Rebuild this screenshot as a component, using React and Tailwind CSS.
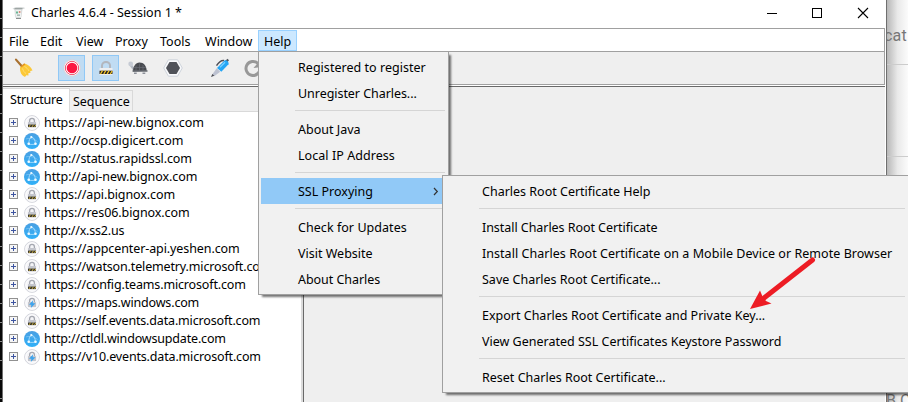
import React from "react";

const hosts = [
  ["lock", "https://api-new.bignox.com", "tracking-[-0.05px]"],
  ["globe", "http://ocsp.digicert.com", "tracking-[-0.06px]"],
  ["globe", "http://status.rapidssl.com", "tracking-[-0.1px]"],
  ["globe", "http://api-new.bignox.com", "tracking-[-0.07px]"],
  ["lock", "https://api.bignox.com", "tracking-[-0.1px]"],
  ["lock", "https://res06.bignox.com", "tracking-[-0.08px]"],
  ["globe", "http://x.ss2.us", "tracking-[-0.2px]"],
  ["lock", "https://appcenter-api.yeshen.com", "tracking-[-0.1px]"],
  ["lock", "https://watson.telemetry.microsoft.com", "tracking-[-0.15px]"],
  ["lock", "https://config.teams.microsoft.com", "tracking-[-0.15px]"],
  ["spark", "https://maps.windows.com", "tracking-[-0.16px]"],
  ["lock", "https://self.events.data.microsoft.com", "tracking-[-0.16px]"],
  ["globe", "http://ctldl.windowsupdate.com", "tracking-[-0.17px]"],
  ["spark", "https://v10.events.data.microsoft.com", "tracking-[-0.16px]"],
];

function HostIcon({ kind }) {
  if (kind === "globe") {
    return (
      <svg width="16" height="16" viewBox="0 0 16 16" className="shrink-0">
        <defs>
          <linearGradient id="sky" x1="0" y1="0" x2="0" y2="1">
            <stop offset="0" stopColor="#4a9fe2" />
            <stop offset="1" stopColor="#2fb0f8" />
          </linearGradient>
        </defs>
        <circle cx="8" cy="8" r="8" fill="url(#sky)" />
        <g fill="none" stroke="#b5e3ff" strokeWidth="0.8">
          <path d="M7.500 4C5.500 5 4.700 7.800 5 11.200M7.500 4C10.300 4.600 11.300 7.400 11.300 11M4.500 11C6 11.600 10 11.600 11.500 11" />
          <path d="M2 6C5 4.800 9.500 5.500 13.500 8.500" strokeOpacity="0.5" />
        </g>
        <g fill="#f2fbff">
          <circle cx="7.300" cy="4" r="1.100" />
          <circle cx="4.700" cy="10.700" r="1.300" />
          <circle cx="11.500" cy="10.700" r="1.300" />
        </g>
      </svg>
    );
  }
  return (
    <svg width="16" height="16" viewBox="0 0 16 16" className="shrink-0">
      <circle cx="8" cy="8" r="7.400" fill="#f4f4f7" stroke="#cfd0d8" strokeWidth="0.9" />
      <circle cx="8" cy="8" r="6.200" fill="none" stroke="#ffffff" strokeWidth="0.9" />
      <path d="M5.600 7.500V5.800a2.400 2.400 0 0 1 4.800 0v1.700" fill="none" stroke="#a5a8b0" strokeWidth="1.300" />
      <rect x="4" y="7" width="8" height="5" rx="0.600" fill="#c3c5cc" />
      {kind === "lock" ? (
        <>
          <rect x="4" y="9.600" width="8" height="2.500" fill="#39362c" />
          <path d="M5 12l1.400-2.300M8 12l1.400-2.300M10.600 12l1.200-2" stroke="#d9bd45" strokeWidth="0.900" />
        </>
      ) : (
        <path d="M9 5.200L5 9.800h2.400L6.800 13l4.700-4.800H8.700z" fill="#3aa3ee" />
      )}
    </svg>
  );
}

function Expander() {
  return (
    <svg width="9" height="9" viewBox="0 0 9 9" className="mb-px shrink-0" shapeRendering="crispEdges">
      <rect x="0.500" y="0.500" width="8" height="8" fill="#f6f6f6" stroke="#919191" />
      <path d="M2 4.500h5M4.500 2v5" stroke="#3d54a0" />
    </svg>
  );
}

function Host({ kind, url, track }) {
  return (
    <div className="flex h-[18px] items-center pl-1.5">
      <Expander />
      <div className="mb-px ml-1.5"><HostIcon kind={kind} /></div>
      <span className={"ml-1 whitespace-nowrap " + track}>{url}</span>
    </div>
  );
}

function Item({ label, track = "", active = false }) {
  return (
    <div className={"mx-0.5 flex h-[26px] items-center justify-between whitespace-nowrap pl-[37px] " + (active ? "bg-[#91c9f7] pr-[7px]" : "")}>
      <span className={"pt-0.5 " + track}>{label}</span>
      {active && (
        <svg width="6" height="9" viewBox="0 0 6 9">
          <path d="M1 1l3.300 3.500L1 8" fill="none" stroke="#333" strokeWidth="1.200" />
        </svg>
      )}
    </div>
  );
}

const Rule = () => (
  <div className="flex h-[10px] pl-9 pr-[3px] pt-1">
    <div className="h-px w-full bg-[#d5d5d5]" />
  </div>
);

const CharlesLogo = () => (
  <svg width="14" height="14" viewBox="0 0 14 14">
    <path d="M0.500 2.500L4 1h5l3.500 0.500v1.500L10.500 3l-1 8-1.500 2H5L3 11 2.500 4z" fill="#d9dcdc" />
    <path d="M2.500 2h8v1.200h-8z" fill="#9da5a3" />
    <path d="M3.800 4h5.200v7H3.800z" fill="#eef2f1" />
    <path d="M4 5.500h2v2H4z" fill="#69b596" />
    <path d="M6.800 5h1.600v2H6.800z" fill="#d68a7c" />
    <path d="M5 8.500h3v1.300H5z" fill="#9bafa9" />
    <path d="M4 12h5v1H4z" fill="#8a8f8f" />
  </svg>
);

const Broom = () => (
  <svg width="20" height="20" viewBox="0 0 20 20">
    <path d="M2 1.600L7.600 8" stroke="#a9712f" strokeWidth="2.200" strokeLinecap="round" />
    <path d="M6 9.500l4.500-4c3.500 1 6.500 3.500 8 7l-2.300.6.300 1.700-2.200.4.200 2.200-2.200-.2-1.300 1.800C7.500 17.500 5.800 14 6 9.500z" fill="#fcc837" />
    <path d="M7 8.800l3.800-3" stroke="#e49420" strokeWidth="1.500" />
    <path d="M10.500 8.500c2 1 3.500 2.500 4.500 4.500M8.500 10.500c.8 2.500 1.800 4 3.500 5" stroke="#ffdf73" strokeWidth="1" fill="none" />
  </svg>
);

const Record = () => (
  <svg width="18" height="18" viewBox="0 0 18 18" className="shrink-0">
    <circle cx="9" cy="9" r="8.300" fill="#fff" stroke="#d2d3dc" />
    <circle cx="9" cy="9" r="6.700" fill="#fff" stroke="#ee3d5b" strokeWidth="0.900" />
    <circle cx="9" cy="9" r="5.300" fill="#fb1742" />
  </svg>
);

const Padlock = () => (
  <svg width="14" height="15" viewBox="0 0 14 15">
    <path d="M3 8V4.500a4 3.600 0 0 1 8 0V8" fill="none" stroke="#b3b7be" strokeWidth="2" />
    <rect x="0.500" y="7" width="13" height="7" rx="0.500" fill="#eeeeef" />
    <rect x="0.500" y="9.700" width="13" height="3.300" fill="#242424" />
    <path d="M1.500 13l2-3.300M4.800 13l2-3.300M8.100 13l2-3.300M11.300 13l1.800-3" stroke="#f3c426" strokeWidth="1.300" />
  </svg>
);

const Turtle = () => (
  <svg width="20" height="14" viewBox="0 0 20 14">
    <path d="M3 4.500l3 4" stroke="#b6bbc4" strokeWidth="2.500" />
    <circle cx="2.700" cy="3" r="2.400" fill="#c6cbd4" />
    <path d="M5 10.500C5 5.500 7.500 1.500 11.500 1.500c4.300 0 7 3.500 7.200 8.300z" fill="#484a50" />
    <path d="M8 4.500v5.500M11.500 2.500V10M15 4v6M6 6.500h12" stroke="#6a6d75" strokeWidth="0.700" />
    <path d="M4.500 10h15" stroke="#65686f" strokeWidth="1.500" />
    <path d="M6 11.500h2.700V13H6zM14.500 11.500h2.800V13h-2.800z" fill="#8d919a" />
  </svg>
);

const Hexagon = () => (
  <svg width="20" height="18" viewBox="0 0 20 18">
    <path d="M5.400 0.800h9.200L19.300 9l-4.700 8.200H5.400L0.700 9z" fill="#f8f9fb" stroke="#ced3db" strokeWidth="1" />
    <path d="M6.500 3h7L17 9l-3.500 6h-7L3 9z" fill="#505259" />
  </svg>
);

const Pen = () => (
  <svg width="20" height="20" viewBox="0 0 20 20">
    <path d="M6.500 7.700C8.500 4.500 10.500 2 14 2.500" stroke="#4d4e56" strokeWidth="1.500" fill="none" />
    <path d="M15 3l2.500-2.300L19 2.200 17 4.800z" fill="#535861" />
    <path d="M7 10l7.500-7.500c1.700-.9 4.800 1.700 4 3.700L11.300 13.700z" fill="#25a6f5" />
    <path d="M10 9.300l5-5" stroke="#7bd0ff" strokeWidth="1.300" />
    <path d="M6.700 10.300l3.500 3.500-6 4.500-2-1.700z" fill="#bcc1d0" />
    <path d="M1 19l1.300-3 2 1.800z" fill="#4b4c52" />
  </svg>
);

const Refresh = () => (
  <svg width="18" height="18" viewBox="0 0 18 18">
    <path d="M14 4.500a7 7 0 1 0 2 4.500" fill="none" stroke="#989898" strokeWidth="3" />
    <path d="M9.500 9l8-1-2-6z" fill="#989898" />
  </svg>
);

export default function App() {
  return (
    <div className="relative flex h-[402px] w-[908px] overflow-hidden bg-[#f8f8f8] font-['Noto_Sans','Liberation_Sans',sans-serif] text-[12.5px] leading-[18px] text-black">
      <div className="h-full w-0.5 shrink-0 bg-[repeating-linear-gradient(to_bottom,#080808_0px,#080808_18px,#898989_18px,#898989_19px)]" />
      <div className="flex h-full w-[885px] shrink-0 flex-col border-x border-[#6f6f6f] bg-white">
        <div className="flex h-7 shrink-0 items-center pb-[3px] pl-[9px]">
          <CharlesLogo />
          <span className="ml-[5px] whitespace-pre">Charles 4.6.4 - Session 1 *</span>
          <svg width="102" height="12" viewBox="0 0 102 12" className="ml-auto mr-[17px]" fill="none" stroke="#000">
            <path d="M0 6.500h10" shapeRendering="crispEdges" />
            <path d="M45.500 1.500h9v9h-9z" shapeRendering="crispEdges" />
            <path d="M91 1l10 10M101 1L91 11" strokeWidth="1.100" />
          </svg>
        </div>
        <div className="mr-px flex h-6 shrink-0 items-stretch border-b border-r border-t border-[#a0a0a0] [&>span]:pt-1">
          <span className="w-[31px] pl-[6px]">File</span>
          <span className="w-[35px] pl-[6px]">Edit</span>
          <span className="w-[39px] pl-[7px]">View</span>
          <span className="w-[45px] pl-[7px]">Proxy</span>
          <span className="w-[45px] pl-[7px]">Tools</span>
          <span className="w-[60px] pl-[7px]">Window</span>
          <div className="mt-px h-[21px] w-[39px] border border-[#99d1ff] bg-[#cce8ff] pl-[5px] pt-0.5">Help</div>
        </div>
        <div className="mr-px flex h-[33px] shrink-0 items-center border-b border-r border-[#a0a0a0] bg-[#efefef] pl-[11px]">
          <Broom />
          <div className="ml-6 flex h-[26px] w-[27px] items-center justify-center border border-[#90c8f6] bg-[#c0dcf3]"><Record /></div>
          <div className="ml-[7px] mr-[9px] flex h-[26px] w-[27px] items-center justify-center border border-[#90c8f6] bg-[#c0dcf3]"><Padlock /></div>
          <Turtle />
          <div className="ml-[15px]"><Hexagon /></div>
          <div className="ml-[27px]"><Pen /></div>
          <div className="ml-[14px]"><Refresh /></div>
        </div>
        <div className="mr-px mt-px flex min-h-0 flex-1 border-t border-[#696969] bg-[#efefef]">
          <div className="flex w-[300px] shrink-0 flex-col">
            <div className="flex h-[25px] shrink-0 items-end">
              <div className="flex h-[24px] w-[67px] items-center border-r border-t border-[#d9d9d9] bg-white pb-px pl-[7px] tracking-[-0.2px]">Structure</div>
              <div className="flex h-[22px] w-[63px] items-center border-b border-r border-t border-[#d9d9d9] bg-[#f0f0f0] pl-[3px] pt-px tracking-[-0.05px]">Sequence</div>
              <div className="h-px flex-1 bg-[#d9d9d9]" />
            </div>
            <div className="flex-1 border-r-2 border-[#dcdcdc] bg-white pt-[2px]">
              {hosts.map(([kind, url, track]) => <Host key={url} kind={kind} url={url} track={track} />)}
            </div>
          </div>
          <div className="flex-1 border-l border-[#696969]" />
        </div>
      </div>
      <div className="flex h-full flex-1 flex-col overflow-hidden bg-linear-to-r from-[#b8b8b8] via-[#e9e9e9] to-[#fbfbfb] font-[Roboto,sans-serif] text-base text-[#777]">
        <div className="flex h-[65px] shrink-0 items-center border-b border-[#ccc] pt-2 tracking-[0.2px]"><span className="-ml-[3px]">cat</span></div>
        <div className="h-[92px] shrink-0 border-b border-[#ccc]" />
        <div className="mt-auto flex h-[10px] whitespace-nowrap leading-[18px]"><span className="-ml-px">B C</span></div>
      </div>

      <div className="absolute left-[258px] top-[51px] h-[244px] w-[191px] border border-[#a0a0a0] bg-[#f1f1f1] pt-0.5 shadow-[3px_3px_2px_-1px_rgba(0,0,0,0.55)]">
        <Item label="Registered to register" track="tracking-[0.03px]" />
        <Item label="Unregister Charles..." track="tracking-[-0.05px]" />
        <Rule />
        <Item label="About Java" />
        <Item label="Local IP Address" track="tracking-[0.06px]" />
        <Rule />
        <Item label="SSL Proxying" active />
        <Rule />
        <Item label="Check for Updates" track="tracking-[0.05px]" />
        <Item label="Visit Website" />
        <Item label="About Charles" track="tracking-[-0.05px]" />
      </div>

      <div className="absolute left-[442px] top-[175px] h-[218px] w-[467px] border border-[#a0a0a0] bg-[#f1f1f1] pt-0.5 shadow-[3px_3px_2px_-1px_rgba(0,0,0,0.55)]">
        <Item label="Charles Root Certificate Help" />
        <Rule />
        <Item label="Install Charles Root Certificate" track="tracking-[-0.05px]" />
        <Item label="Install Charles Root Certificate on a Mobile Device or Remote Browser" track="tracking-[0.04px]" />
        <Item label="Save Charles Root Certificate..." />
        <Rule />
        <Item label="Export Charles Root Certificate and Private Key..." />
        <Item label="View Generated SSL Certificates Keystore Password" />
        <Rule />
        <Item label="Reset Charles Root Certificate..." />
      </div>

      <svg className="absolute left-[745px] top-[253px]" width="75" height="60" viewBox="0 0 75 60">
        <path d="M67.500 7L19 45" stroke="#ed1c24" strokeWidth="5" strokeLinecap="round" />
        <path d="M5 56L15 37.500 17.500 43.500 21 48 26.500 50.500z" fill="#ed1c24" />
      </svg>
    </div>
  );
}
